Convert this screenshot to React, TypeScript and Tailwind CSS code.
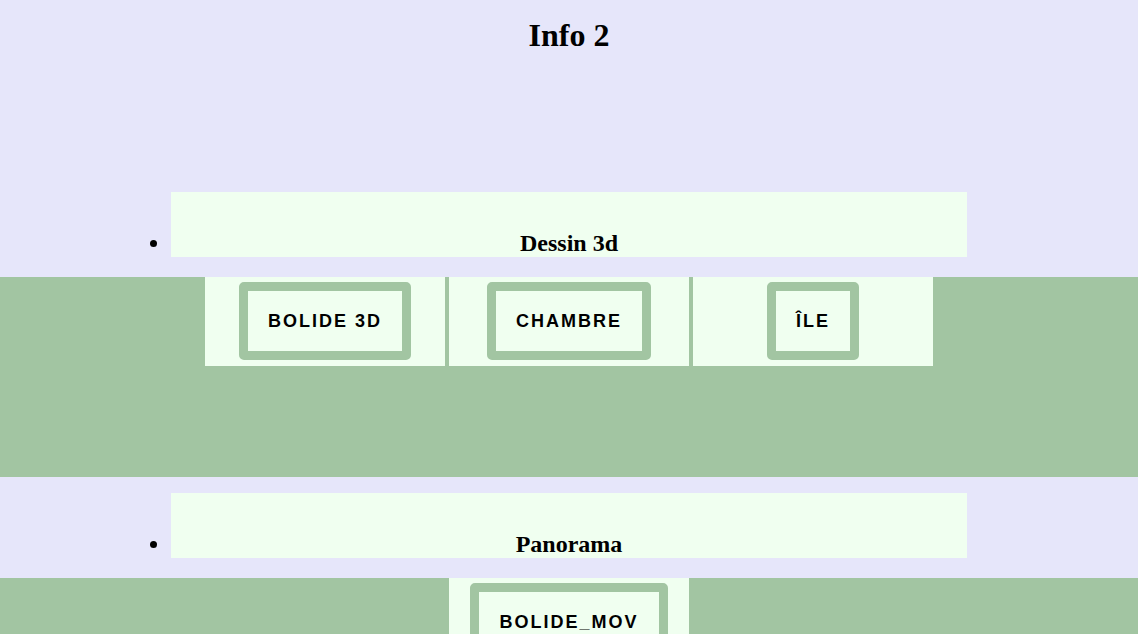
import React from "react";

const sections = [
  { title: "Dessin 3d", items: ["Bolide 3D", "Chambre", "Île"] },
  { title: "Panorama", items: ["Bolide_mov"] },
];

const Tile = ({ label }: { label: string }) => (
  <div className="w-[240px] h-[89px] bg-[#f0fff0] flex items-start justify-center pt-[5px]">
    <button className="border-[9px] border-[#a2c5a2] rounded-[5px] bg-[#f0fff0] px-5 py-5 leading-[20px] text-[18px] font-bold uppercase tracking-[2px] text-black font-['Liberation_Sans',Arial,sans-serif]">
      {label}
    </button>
  </div>
);

export default function App() {
  return (
    <div className="min-h-[634px] bg-[#e6e6fa] font-['Liberation_Serif','Times_New_Roman',serif] text-black overflow-hidden">
      <h1 className="pt-[17px] text-[32px] leading-[37px] font-bold text-center">
        Info 2
      </h1>
      <div className="h-[138px]" />
      {sections.map((s, i) => (
        <section key={s.title} className={i > 0 ? "mt-4" : ""}>
          <ul className="list-disc">
            <li className="w-[70%] mx-auto bg-[#f0fff0] pt-[37px] text-[24px] leading-[28px] font-bold text-center">
              {s.title}
            </li>
          </ul>
          <div className="mt-5 h-[200px] bg-[#a2c5a2] flex justify-center items-start gap-[4px]">
            {s.items.map((it) => (
              <Tile key={it} label={it} />
            ))}
          </div>
        </section>
      ))}
    </div>
  );
}
